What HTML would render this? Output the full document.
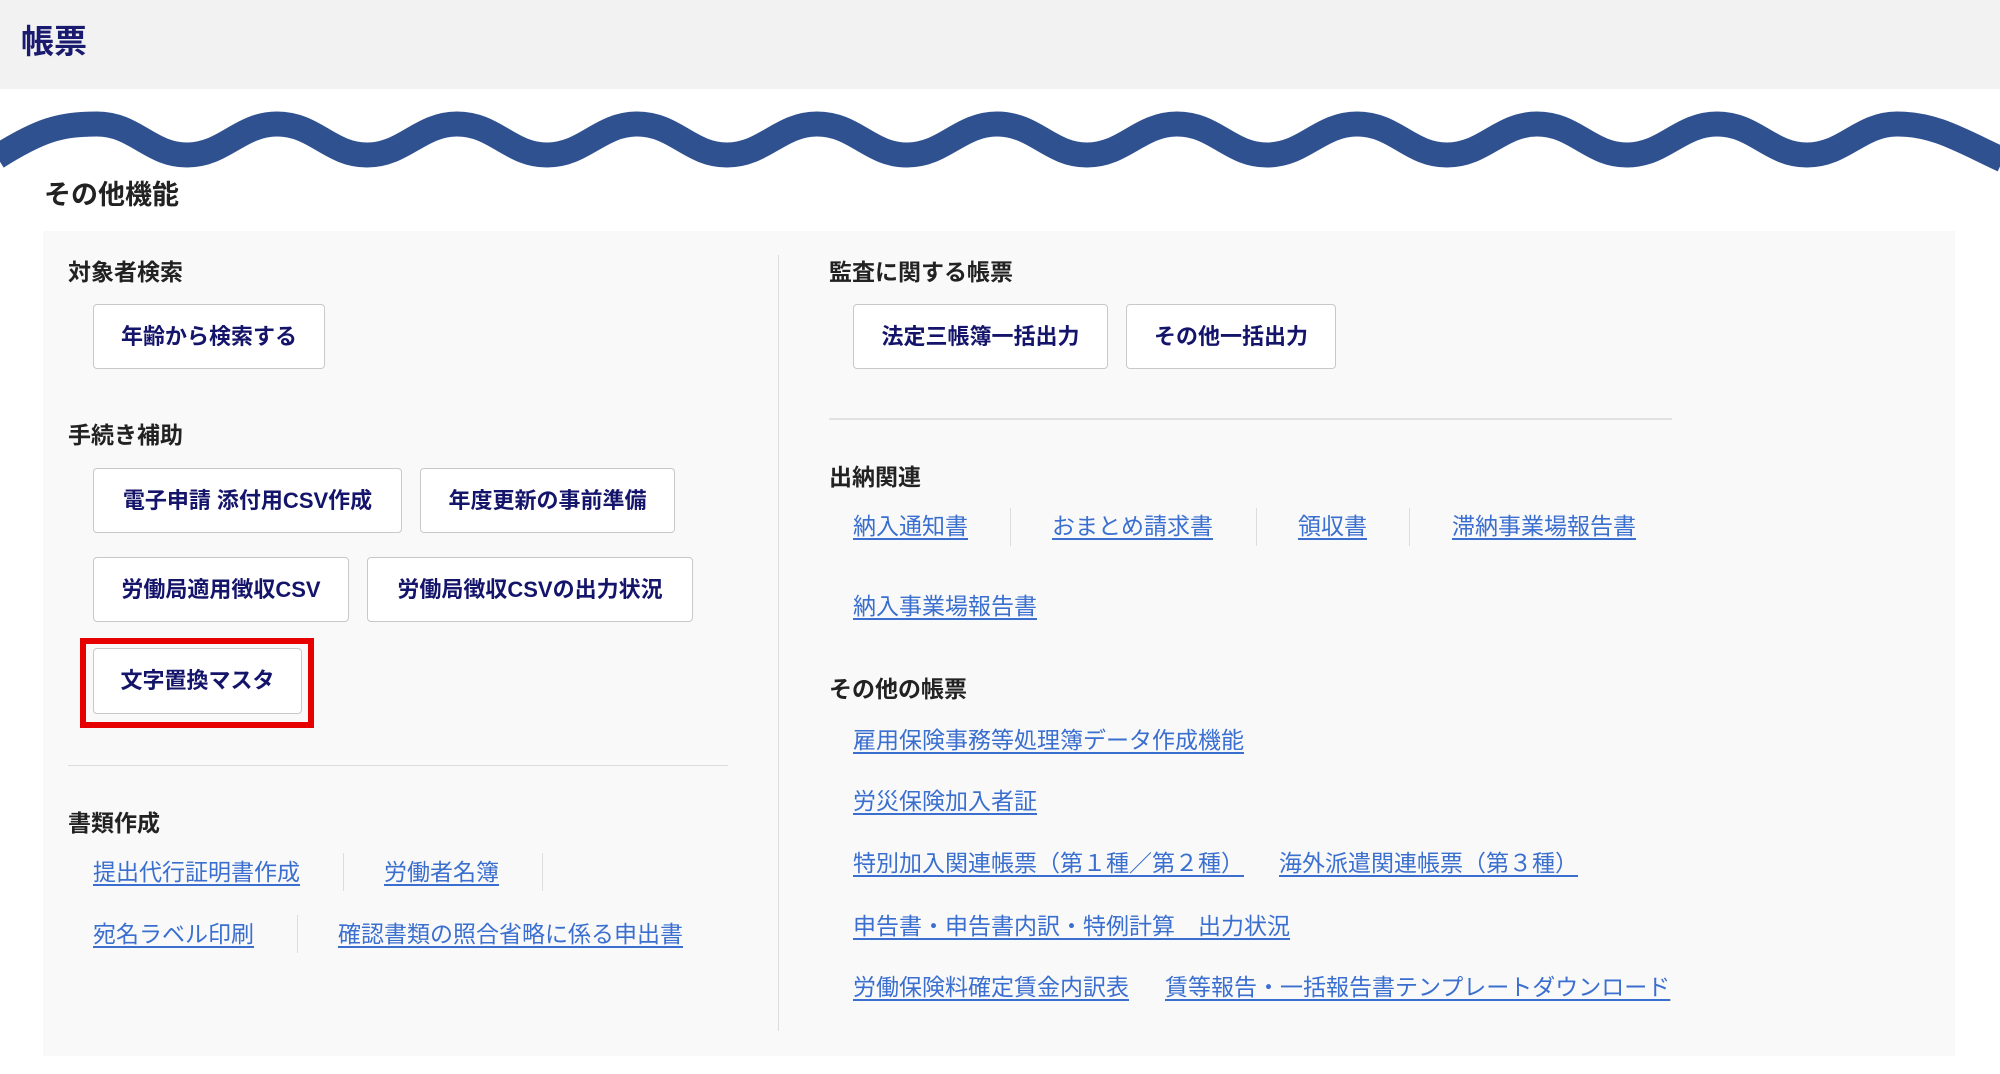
<!DOCTYPE html>
<html><head><meta charset="utf-8"><style>
*{margin:0;padding:0;box-sizing:border-box}
body{width:2000px;height:1074px;background:#fff;font-family:"Liberation Sans","Noto Sans CJK JP",sans-serif;position:relative;overflow:hidden}
.a{position:absolute;white-space:nowrap}
.hdr{left:0;top:0;width:2000px;height:89px;background:#f2f2f2}
.title{left:21px;top:20px;font-size:33px;font-weight:bold;color:#1a1a6e;line-height:44px}
.h{font-size:23px;font-weight:bold;color:#222;line-height:30px}
.btn{background:#fff;border:1px solid #c8c8c8;border-radius:4px;display:flex;align-items:center;justify-content:center;font-size:22px;font-weight:bold;color:#14146b;padding-bottom:4px}
.lk{font-size:23px;color:#3a6fd0;text-decoration:underline;text-underline-offset:4px;line-height:30px}
.sep{width:1px;background:#ddd}
</style></head><body>
<div class="a hdr"></div>
<div class="a title">帳票</div>
<svg class="a" style="left:0;top:95px" width="2000" height="90" viewBox="0 95 2000 90">
<path d="M-3 157 C40 130 60 124 97 124 C135 124 150 155 187 155 C224 155 240 124 277 124 C315 124 330 155 367 155 C404 155 420 124 457 124 C495 124 510 155 547 155 C584 155 600 124 637 124 C675 124 690 155 727 155 C764 155 780 124 817 124 C855 124 870 155 907 155 C944 155 960 124 997 124 C1035 124 1050 155 1087 155 C1124 155 1140 124 1177 124 C1215 124 1230 155 1267 155 C1304 155 1320 124 1357 124 C1395 124 1410 155 1447 155 C1484 155 1500 124 1537 124 C1575 124 1590 155 1627 155 C1664 155 1680 124 1717 124 C1755 124 1770 155 1807 155 C1844 155 1860 124 1897 124 C1935 124 1960 140 2003 160" fill="none" stroke="#2f5190" stroke-width="25"/>
</svg>
<div class="a h" style="left:44px;top:178px;font-size:27px;line-height:34px">その他機能</div>
<div class="a" style="left:43px;top:231px;width:1912px;height:825px;background:#f9f9f9"></div>
<div class="a sep" style="left:778px;top:255px;height:776px"></div>

<div class="a h" style="left:68px;top:257px">対象者検索</div>
<div class="a btn" style="left:93px;top:304px;width:232px;height:65px">年齢から検索する</div>
<div class="a h" style="left:68px;top:420px">手続き補助</div>
<div class="a btn" style="left:93px;top:468px;width:309px;height:65px">電子申請 添付用CSV作成</div>
<div class="a btn" style="left:420px;top:468px;width:255px;height:65px">年度更新の事前準備</div>
<div class="a btn" style="left:93px;top:557px;width:256px;height:65px">労働局適用徴収CSV</div>
<div class="a btn" style="left:367px;top:557px;width:326px;height:65px">労働局徴収CSVの出力状況</div>
<div class="a" style="left:80px;top:638px;width:234px;height:90px;border:6px solid #e60000"></div>
<div class="a btn" style="left:93px;top:648px;width:209px;height:66px">文字置換マスタ</div>
<div class="a" style="left:68px;top:765px;width:660px;height:1px;background:#ddd"></div>
<div class="a h" style="left:68px;top:808px">書類作成</div>
<div class="a lk" style="left:93px;top:857px">提出代行証明書作成</div>
<div class="a sep" style="left:343px;top:853px;height:38px"></div>
<div class="a lk" style="left:384px;top:857px">労働者名簿</div>
<div class="a sep" style="left:542px;top:853px;height:38px"></div>
<div class="a lk" style="left:93px;top:919px">宛名ラベル印刷</div>
<div class="a sep" style="left:297px;top:915px;height:38px"></div>
<div class="a lk" style="left:338px;top:919px">確認書類の照合省略に係る申出書</div>

<div class="a h" style="left:829px;top:257px">監査に関する帳票</div>
<div class="a btn" style="left:853px;top:304px;width:255px;height:65px">法定三帳簿一括出力</div>
<div class="a btn" style="left:1126px;top:304px;width:210px;height:65px">その他一括出力</div>
<div class="a" style="left:829px;top:418px;width:843px;height:2px;background:#e2e2e2"></div>
<div class="a h" style="left:829px;top:462px">出納関連</div>
<div class="a lk" style="left:853px;top:511px">納入通知書</div>
<div class="a sep" style="left:1010px;top:508px;height:38px"></div>
<div class="a lk" style="left:1052px;top:511px">おまとめ請求書</div>
<div class="a sep" style="left:1256px;top:508px;height:38px"></div>
<div class="a lk" style="left:1298px;top:511px">領収書</div>
<div class="a sep" style="left:1409px;top:508px;height:38px"></div>
<div class="a lk" style="left:1452px;top:511px">滞納事業場報告書</div>
<div class="a lk" style="left:853px;top:591px">納入事業場報告書</div>
<div class="a h" style="left:829px;top:674px">その他の帳票</div>
<div class="a lk" style="left:853px;top:725px">雇用保険事務等処理簿データ作成機能</div>
<div class="a lk" style="left:853px;top:786px">労災保険加入者証</div>
<div class="a lk" style="left:853px;top:848px">特別加入関連帳票（第１種／第２種）</div>
<div class="a lk" style="left:1279px;top:848px">海外派遣関連帳票（第３種）</div>
<div class="a lk" style="left:853px;top:911px">申告書・申告書内訳・特例計算　出力状況</div>
<div class="a lk" style="left:853px;top:972px">労働保険料確定賃金内訳表</div>
<div class="a lk" style="left:1165px;top:972px">賃等報告・一括報告書テンプレートダウンロード</div>
</body></html>
